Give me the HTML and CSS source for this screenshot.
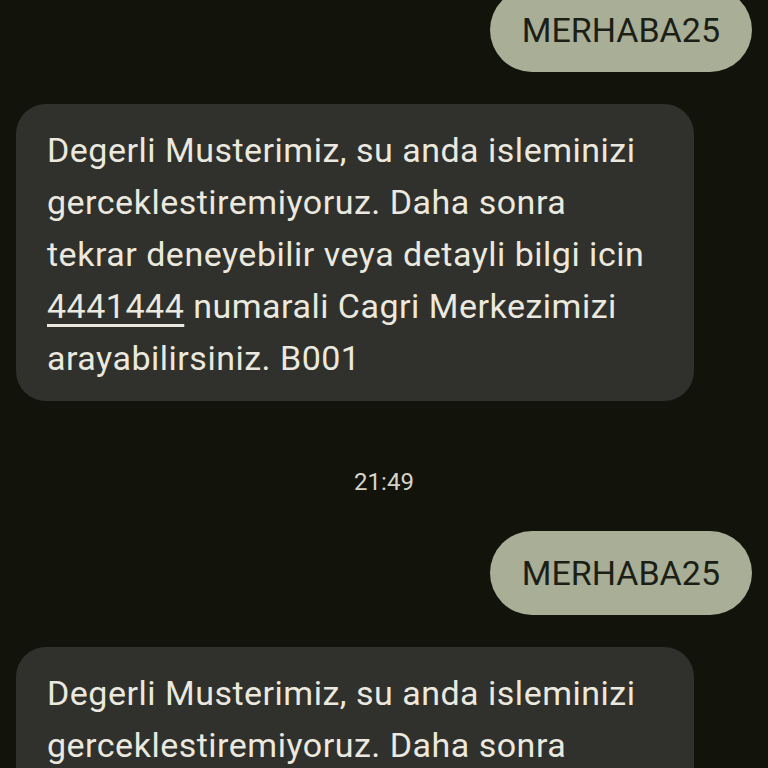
FILE: index.html
```html
<!DOCTYPE html>
<html lang="tr">
<head>
    <meta charset="UTF-8">
    <meta name="viewport" content="width=device-width, initial-scale=1.0">
    <link rel="stylesheet" href="styles.css">
    <title>Mesajlar</title>
</head>
<body>
    <div class="thread">
        <div class="msg sent first">
            <div class="bubble">MERHABA25</div>
        </div>
        <div class="msg received">
            <div class="bubble">
                Degerli Musterimiz, su anda isleminizi gerceklestiremiyoruz. Daha sonra tekrar deneyebilir veya detayli bilgi icin <a href="#">4441444</a> numarali Cagri Merkezimizi arayabilirsiniz. B001
            </div>
        </div>
        <div class="timestamp">21:49</div>
        <div class="msg sent">
            <div class="bubble">MERHABA25</div>
        </div>
        <div class="msg received">
            <div class="bubble">
                Degerli Musterimiz, su anda isleminizi gerceklestiremiyoruz. Daha sonra tekrar deneyebilir veya detayli bilgi icin <a href="#">4441444</a> numarali Cagri Merkezimizi arayabilirsiniz. B001
            </div>
        </div>
    </div>
</body>
</html>
```

FILE: styles.css
```css
/* dark sms thread */
body {
    font-family: Roboto, "Noto Sans", sans-serif;
    background-color: #12130b;
    margin: 0;
    padding: 0;
    overflow: hidden;
}

.thread {
    display: flex;
    flex-direction: column;
    padding: 0 16px;
    margin-top: -12px;
}

.msg {
    display: flex;
    margin-bottom: 32px;
}

.msg.sent {
    justify-content: flex-end;
}

.msg.received {
    justify-content: flex-start;
}

.bubble {
    font-size: 34px;
    line-height: 52px;
}

.sent .bubble {
    background-color: #a9ae97;
    color: #1c1f15;
    border-radius: 42px;
    padding: 16px 32px;
}

.received .bubble {
    width: 616px;
    background-color: #30302c;
    color: #ebe9df;
    border-radius: 30px;
    padding: 20px 31px 17px;
    letter-spacing: 0.5px;
}

.received .bubble a {
    color: #ebe9df;
    text-decoration: underline;
    text-decoration-thickness: 3px;
    text-underline-offset: 6px;
}

.timestamp {
    text-align: center;
    color: #d4d4c8;
    font-size: 24px;
    line-height: 30px;
    margin-top: 34px;
    margin-bottom: 34px;
}
```
